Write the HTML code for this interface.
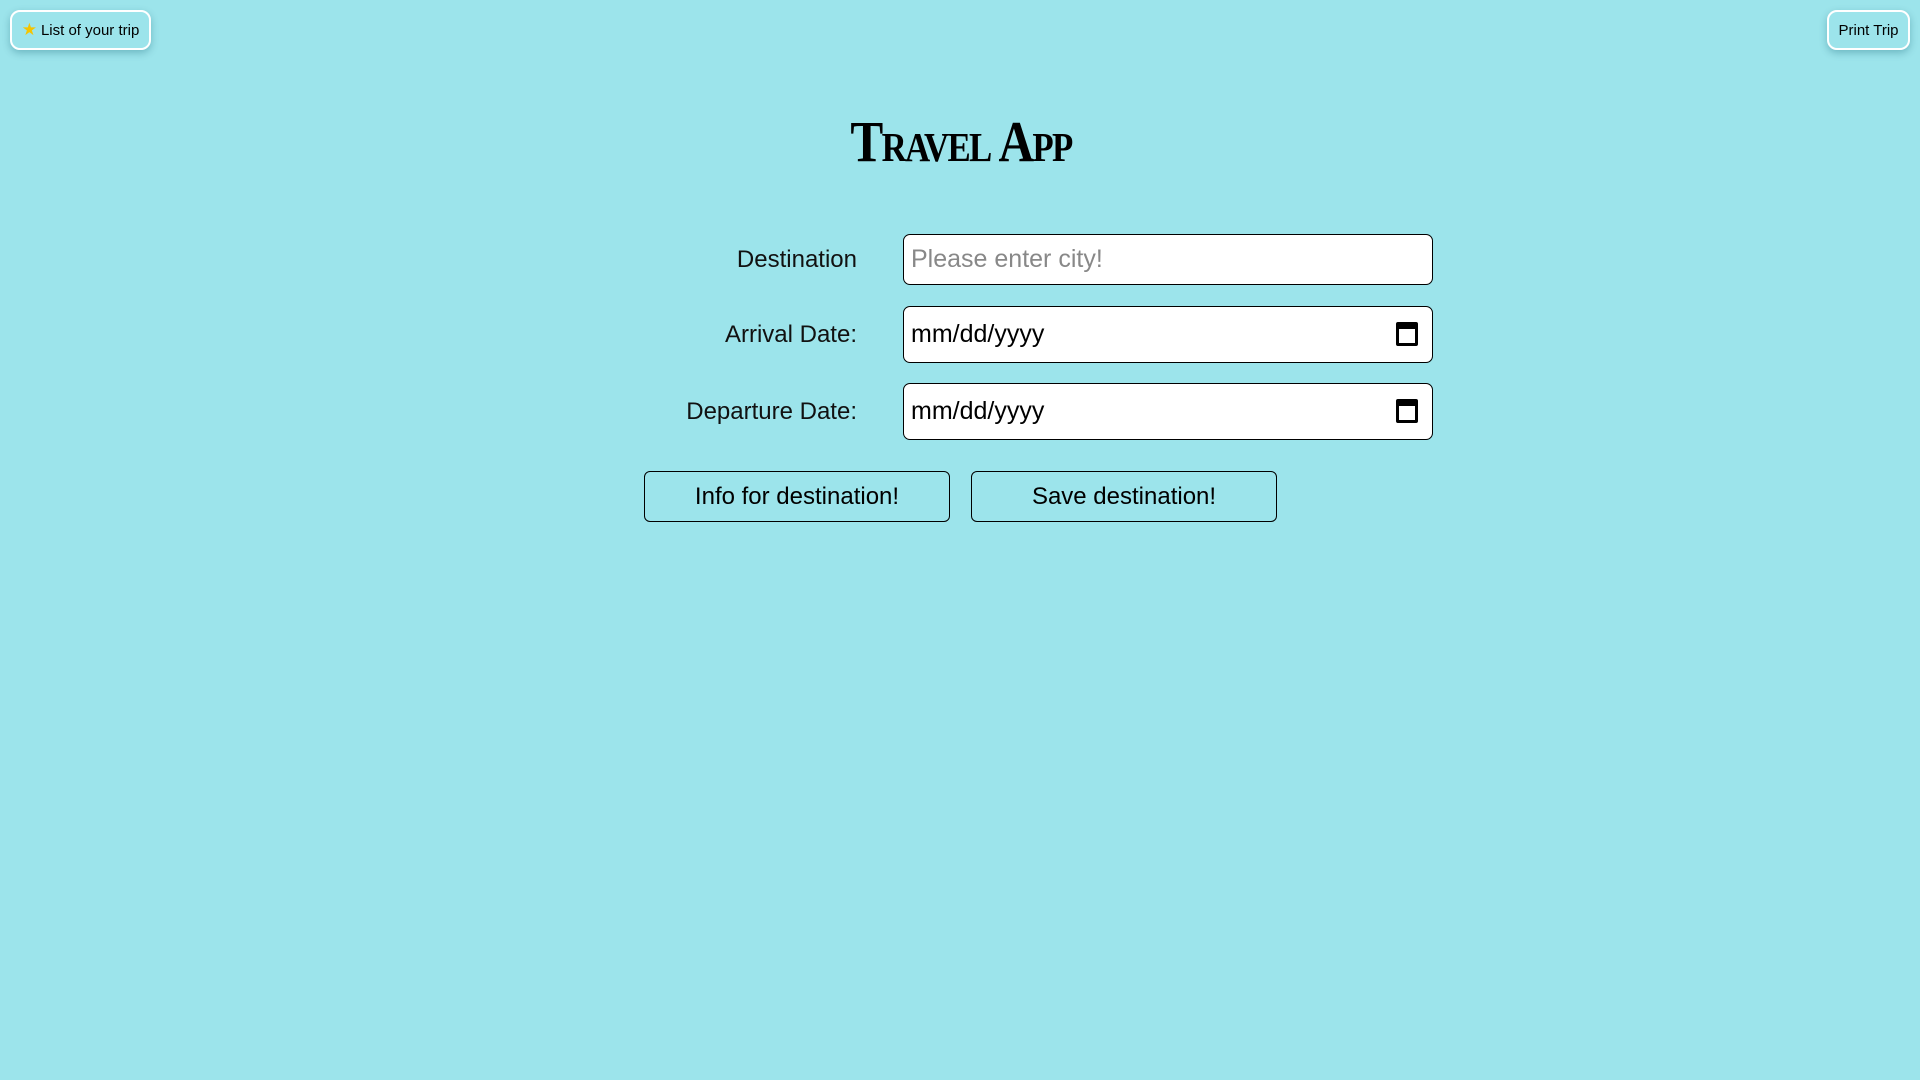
<!DOCTYPE html>
<html><head><meta charset="utf-8"><style>
html,body{margin:0;width:1920px;height:1080px;background:#9ce4eb;font-family:"Liberation Sans",sans-serif;overflow:hidden}
.tb{position:absolute;top:10px;height:40px;box-sizing:border-box;border:2px solid #fff;border-radius:10px;box-shadow:0 3px 8px rgba(0,80,100,.3);font-size:15px;display:flex;align-items:center;justify-content:center;color:#000}
h1{position:absolute;top:108px;left:0;width:1922px;text-align:center;margin:0;font-family:"Liberation Serif",serif;font-weight:bold;font-variant:small-caps;font-size:58px;letter-spacing:-2px;transform:scaleX(0.85)}
.lab{position:absolute;right:1063px;font-size:24px;color:#111}
.in{position:absolute;left:903px;width:530px;box-sizing:border-box;background:#fff;border:1.5px solid #000;border-radius:7px;font-size:25px;padding-left:7px;display:flex;align-items:center}
.btn{position:absolute;top:471px;height:51px;width:306px;box-sizing:border-box;border:1.5px solid #000;border-radius:6px;font-size:24px;display:flex;align-items:center;justify-content:center}
.cal{position:absolute;right:14px;top:50%;margin-top:-13px;width:22px;height:24px;border:3px solid #000;border-top-width:7px;border-radius:2px;box-sizing:border-box}
</style></head><body>
<div class="tb" style="left:10px;width:141px"><span style="color:#f5c400;margin-right:4px;font-size:17px">★</span>List of your trip</div>
<div class="tb" style="left:1827px;width:83px">Print Trip</div>
<h1>Travel App</h1>
<div class="lab" style="top:246px">Destination</div>
<div class="lab" style="top:321px">Arrival Date:</div>
<div class="lab" style="top:398px">Departure Date:</div>
<div class="in" style="top:234px;height:51px;color:#888">Please enter city!</div>
<div class="in" style="top:306px;height:57px">mm/dd/yyyy<div class="cal"></div></div>
<div class="in" style="top:383px;height:57px">mm/dd/yyyy<div class="cal"></div></div>
<div class="btn" style="left:644px">Info for destination!</div>
<div class="btn" style="left:971px">Save destination!</div>
</body></html>
